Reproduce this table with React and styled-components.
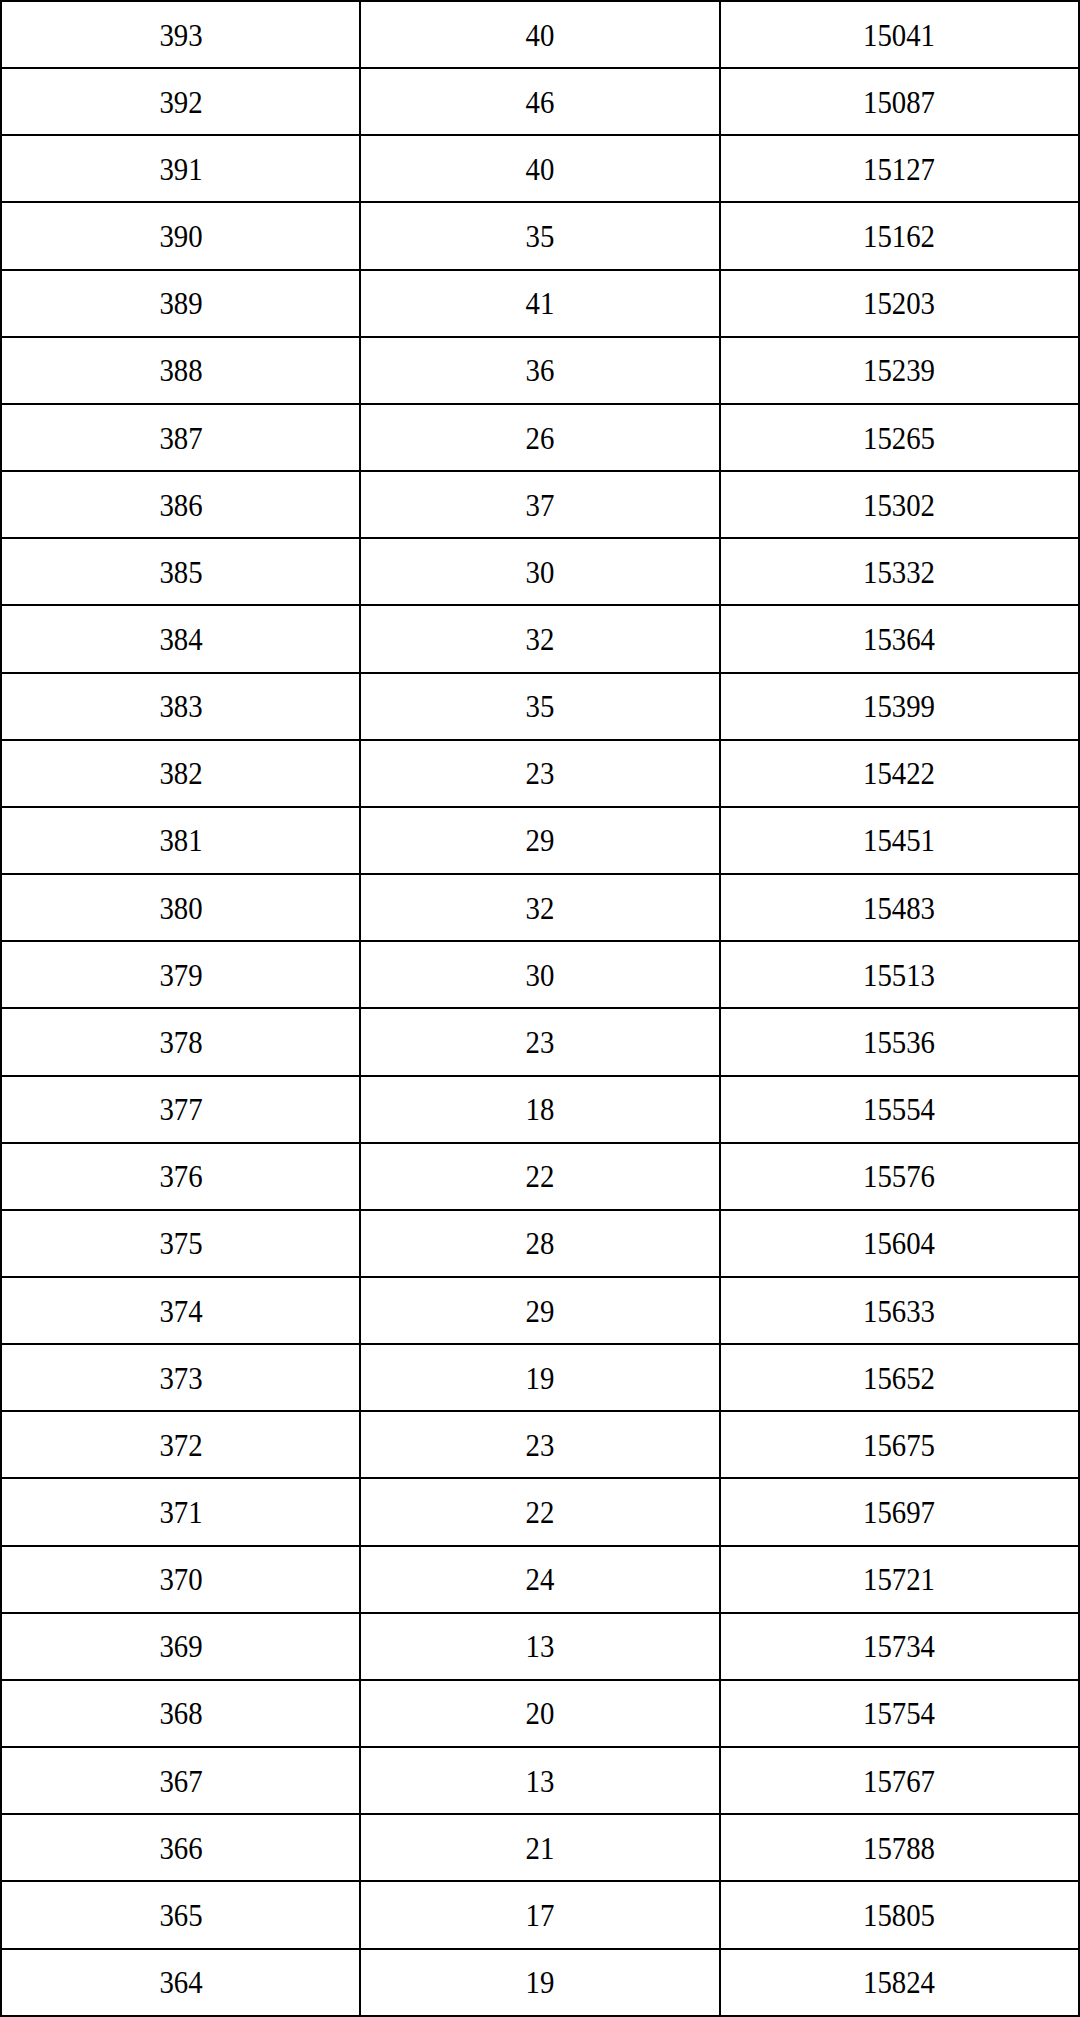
import React from "react";
import styled, { createGlobalStyle } from "styled-components";

const GlobalStyle = createGlobalStyle`
  html, body { margin: 0; padding: 0; background: #fff; }
  body { font-family: "Liberation Serif", "Noto Sans CJK SC", serif; }
`;

const Table = styled.table`
  width: 1080px;
  height: 2017px;
  border-collapse: collapse;
  table-layout: fixed;
  background: #fff;
`;

const Cell = styled.td`
  border: 2px solid #000;
  text-align: center;
  vertical-align: middle;
  padding: 0;
  color: #000;
`;

const Num = styled.span`
  display: inline-block;
  font-family: "Liberation Serif", "Noto Sans CJK SC", serif;
  font-size: 32px;
  line-height: 1;
  transform: scaleX(0.9);
`;

const rows = [
  [393, 40, 15041], [392, 46, 15087], [391, 40, 15127], [390, 35, 15162],
  [389, 41, 15203], [388, 36, 15239], [387, 26, 15265], [386, 37, 15302],
  [385, 30, 15332], [384, 32, 15364], [383, 35, 15399], [382, 23, 15422],
  [381, 29, 15451], [380, 32, 15483], [379, 30, 15513], [378, 23, 15536],
  [377, 18, 15554], [376, 22, 15576], [375, 28, 15604], [374, 29, 15633],
  [373, 19, 15652], [372, 23, 15675], [371, 22, 15697], [370, 24, 15721],
  [369, 13, 15734], [368, 20, 15754], [367, 13, 15767], [366, 21, 15788],
  [365, 17, 15805], [364, 19, 15824],
];

export default function App() {
  return (
    <>
      <GlobalStyle />
      <Table>
        <tbody>
          {rows.map((r) => (
            <tr key={r[0]}>
              {r.map((v, i) => (
                <Cell key={i}>
                  <Num>{v}</Num>
                </Cell>
              ))}
            </tr>
          ))}
        </tbody>
      </Table>
    </>
  );
}
